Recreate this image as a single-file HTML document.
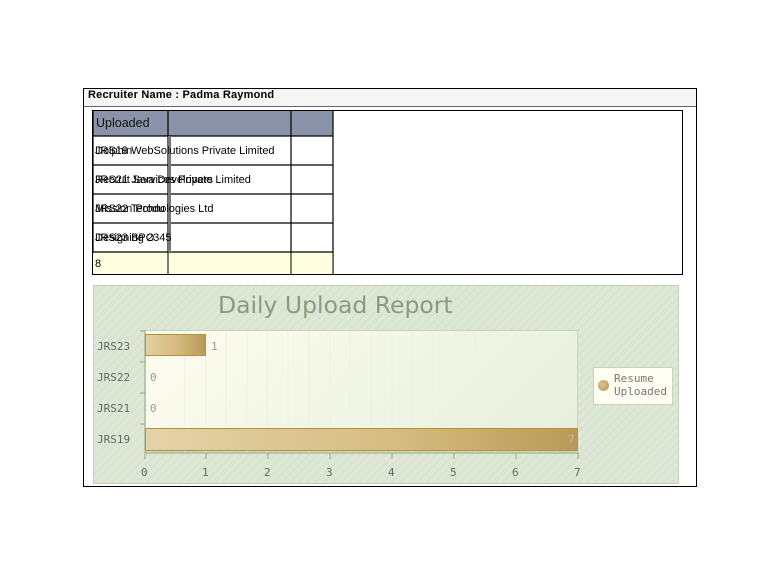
<!DOCTYPE html><html><head><style>
body{margin:0;width:770px;height:565px;background:#fff;position:relative;font-family:"Liberation Sans",sans-serif;overflow:hidden}
.a{position:absolute}
.t{font-size:11px;color:#000;white-space:nowrap}
.m{font-family:"DejaVu Sans Mono","Liberation Mono",monospace;font-size:11px;color:#666}
</style></head><body>
<div class="a" style="left:83px;top:88px;width:612px;height:397px;border:1px solid #000"></div>
<div class="a" style="left:84px;top:89px;width:612px;height:17px;background:#f6f6f6;border-bottom:1px solid #666"></div>
<div class="a t" style="left:88px;top:89px;font-weight:bold;font-size:11px;letter-spacing:0.2px">Recruiter Name : Padma Raymond</div>
<div class="a" style="left:92px;top:110px;width:589px;height:163px;border:1px solid #000"></div>
<div class="a" style="left:93px;top:111px;width:240px;height:25px;background:#8a93a7"></div>
<div class="a t" style="left:96px;top:116px;font-size:12.5px;color:#111">Uploaded</div>
<svg class="a" style="left:92px;top:110px" width="245" height="166">
<g stroke="#000" stroke-width="1.2" fill="none">
<line x1="0" y1="26" x2="241" y2="26"/><line x1="0" y1="55" x2="241" y2="55"/><line x1="0" y1="84" x2="241" y2="84"/><line x1="0" y1="113" x2="241" y2="113"/><line x1="0" y1="142" x2="241" y2="142"/>
<line x1="76" y1="0" x2="76" y2="164"/><line x1="199" y1="0" x2="199" y2="164"/><line x1="241" y1="0" x2="241" y2="164"/><line x1="1" y1="0" x2="1" y2="164"/>
</g>
<rect x="1" y="143" width="240" height="21" fill="#ffffe0"/>
<g stroke="#000"><line x1="76" y1="142" x2="76" y2="164"/><line x1="199" y1="142" x2="199" y2="164"/><line x1="241" y1="142" x2="241" y2="164"/></g>
<rect x="76" y="26" width="3" height="116" fill="#777"/>
</svg>
<div class="a t" style="left:95px;top:145px">JRS19 WebSolutions Private Limited</div>
<div class="a t" style="left:95px;top:145px">Dolphin</div>
<div class="a t" style="left:95px;top:174px">JRS21 Java Developers</div>
<div class="a t" style="left:95px;top:174px">Recruit Services Private Limited</div>
<div class="a t" style="left:95px;top:203px">JRS22 Technologies Ltd</div>
<div class="a t" style="left:95px;top:203px">Mission Produ</div>
<div class="a t" style="left:95px;top:232px">JRS23 BPO</div>
<div class="a t" style="left:95px;top:232px">Designing 2345</div>
<div class="a t" style="left:95px;top:258px">8</div>

<div class="a" style="left:93px;top:285px;width:584px;height:197px;background:repeating-linear-gradient(135deg,#d9e4d0 0 3px,#dfe8d7 3px 6px);border:1px solid #c2d1b4"></div>
<div class="a" style="left:218px;top:291px;font-family:'DejaVu Sans',sans-serif;font-size:23.5px;color:#8d9a7d">Daily Upload Report</div>
<div class="a" style="left:145px;top:330px;width:433px;height:122px;background:linear-gradient(135deg,#fdfdf0,#e6eedc);border:1px solid #c8d4b8;box-sizing:border-box"></div>
<svg class="a" style="left:135px;top:325px" width="450" height="140">
<g stroke="#edf0e4"><line x1="50" y1="6" x2="50" y2="127"/><line x1="71" y1="6" x2="71" y2="127"/><line x1="91" y1="6" x2="91" y2="127"/><line x1="112" y1="6" x2="112" y2="127"/><line x1="132" y1="6" x2="132" y2="127"/><line x1="153" y1="6" x2="153" y2="127"/><line x1="174" y1="6" x2="174" y2="127"/><line x1="195" y1="6" x2="195" y2="127"/><line x1="215" y1="6" x2="215" y2="127"/><line x1="236" y1="6" x2="236" y2="127"/><line x1="257" y1="6" x2="257" y2="127"/><line x1="277" y1="6" x2="277" y2="127"/><line x1="298" y1="6" x2="298" y2="127"/><line x1="319" y1="6" x2="319" y2="127"/><line x1="340" y1="6" x2="340" y2="127"/><line x1="360" y1="6" x2="360" y2="127"/><line x1="381" y1="6" x2="381" y2="127"/><line x1="402" y1="6" x2="402" y2="127"/><line x1="422" y1="6" x2="422" y2="127"/></g>
<g stroke="#b9c6a8" stroke-width="2"><line x1="10" y1="128" x2="444" y2="128"/><line x1="10" y1="5" x2="10" y2="128"/></g>
<g stroke="#9aa58a"><line x1="5" y1="6" x2="10" y2="6"/><line x1="5" y1="37" x2="10" y2="37"/><line x1="5" y1="68" x2="10" y2="68"/><line x1="5" y1="99" x2="10" y2="99"/><line x1="10" y1="128" x2="10" y2="134"/><line x1="71" y1="128" x2="71" y2="134"/><line x1="133" y1="128" x2="133" y2="134"/><line x1="195" y1="128" x2="195" y2="134"/><line x1="257" y1="128" x2="257" y2="134"/><line x1="319" y1="128" x2="319" y2="134"/><line x1="381" y1="128" x2="381" y2="134"/><line x1="443" y1="128" x2="443" y2="134"/></g>
</svg>
<div class="a" style="left:145px;top:334px;width:61px;height:22px;background:linear-gradient(90deg,#e2cfa2,#d6bc82 50%,#b99a58);border:1px solid #b8923a;box-sizing:border-box"></div>
<div class="a" style="left:145px;top:428px;width:433px;height:23px;background:linear-gradient(90deg,#e4d3a8,#d5bb80 60%,#b89a58);border:1px solid #b8923a;box-sizing:border-box"></div>
<div class="a m" style="left:211px;top:340px;color:#999">1</div>
<div class="a m" style="left:150px;top:371px;color:#999">0</div>
<div class="a m" style="left:150px;top:402px;color:#999">0</div>
<div class="a m" style="left:568px;top:433px;color:#bbb">7</div>
<div class="a m" style="left:97px;top:340px">JRS23</div>
<div class="a m" style="left:97px;top:371px">JRS22</div>
<div class="a m" style="left:97px;top:402px">JRS21</div>
<div class="a m" style="left:97px;top:433px">JRS19</div>
<div class="a m" style="left:141px;top:466px">0</div><div class="a m" style="left:202px;top:466px">1</div><div class="a m" style="left:264px;top:466px">2</div><div class="a m" style="left:326px;top:466px">3</div><div class="a m" style="left:388px;top:466px">4</div><div class="a m" style="left:450px;top:466px">5</div><div class="a m" style="left:512px;top:466px">6</div><div class="a m" style="left:574px;top:466px">7</div>
<div class="a" style="left:593px;top:367px;width:80px;height:38px;background:#fefef2;border:1px solid #c8d4b8;box-sizing:border-box"></div>
<div class="a" style="left:598px;top:380px;width:11px;height:11px;border-radius:50%;background:radial-gradient(circle at 40% 40%,#dcc28a,#b8984f)"></div>
<div class="a m" style="left:614px;top:372px;line-height:13px;color:#777">Resume<br>Uploaded</div>
</body></html>
